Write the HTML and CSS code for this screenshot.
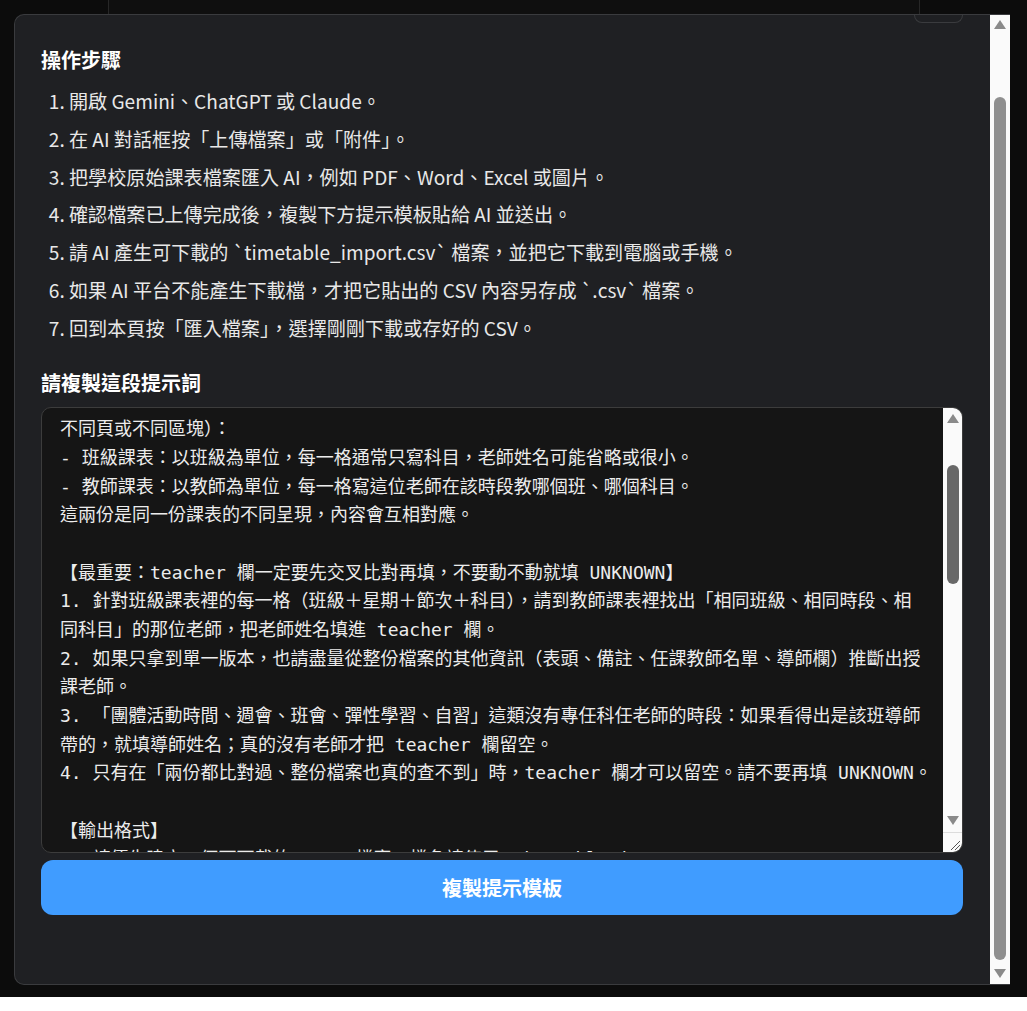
FILE: index.html
```html
<!DOCTYPE html>
<html lang="zh-Hant">
<head>
  <meta charset="UTF-8" />
  <meta name="viewport" content="width=device-width, initial-scale=1" />
  <title>匯入課表</title>
  <link rel="stylesheet" href="styles.css">
</head>
<body>
  <div class="backdrop">
    <div class="page-card"></div>

    <div class="modal">
      <div class="modal-body">
        <div class="close-tab"></div>

        <h2 class="section-title">操作步驟</h2>
        <ol class="steps">
          <li>開啟 Gemini、ChatGPT 或 Claude。</li>
          <li>在 AI 對話框按「上傳檔案」或「附件」。</li>
          <li>把學校原始課表檔案匯入 AI，例如 PDF、Word、Excel 或圖片。</li>
          <li>確認檔案已上傳完成後，複製下方提示模板貼給 AI 並送出。</li>
          <li>請 AI 產生可下載的 `timetable_import.csv` 檔案，並把它下載到電腦或手機。</li>
          <li>如果 AI 平台不能產生下載檔，才把它貼出的 CSV 內容另存成 `.csv` 檔案。</li>
          <li>回到本頁按「匯入檔案」，選擇剛剛下載或存好的 CSV。</li>
        </ol>

        <h2 class="section-title prompt-title">請複製這段提示詞</h2>
        <div class="prompt-box">
          <div class="prompt-text">不同頁或不同區塊）：
- 班級課表：以班級為單位，每一格通常只寫科目，老師姓名可能省略或很小。
- 教師課表：以教師為單位，每一格寫這位老師在該時段教哪個班、哪個科目。
這兩份是同一份課表的不同呈現，內容會互相對應。

【最重要：teacher 欄一定要先交叉比對再填，不要動不動就填 UNKNOWN】
1. 針對班級課表裡的每一格（班級＋星期＋節次＋科目），請到教師課表裡找出「相同班級、相同時段、相
同科目」的那位老師，把老師姓名填進 teacher 欄。
2. 如果只拿到單一版本，也請盡量從整份檔案的其他資訊（表頭、備註、任課教師名單、導師欄）推斷出授
課老師。
3. 「團體活動時間、週會、班會、彈性學習、自習」這類沒有專任科任老師的時段：如果看得出是該班導師
帶的，就填導師姓名；真的沒有老師才把 teacher 欄留空。
4. 只有在「兩份都比對過、整份檔案也真的查不到」時，teacher 欄才可以留空。請不要再填 UNKNOWN。

【輸出格式】
1. 請優先建立一個可下載的 .csv 檔案，檔名請使用 timetable_import.csv。</div>
          <div class="box-scrollbar">
            <div class="arrow-up"></div>
            <div class="box-thumb"></div>
            <div class="arrow-down"></div>
            <div class="resize-corner">
              <svg width="19" height="19" viewBox="0 0 19 19">
                <line x1="8" y1="17" x2="17" y2="8" stroke="#555" stroke-width="1" />
                <line x1="12" y1="17" x2="17" y2="12" stroke="#555" stroke-width="1" />
              </svg>
            </div>
          </div>
        </div>

        <button class="copy-btn">複製提示模板</button>
      </div>

      <div class="modal-scrollbar">
        <div class="arrow-up"></div>
        <div class="modal-thumb"></div>
        <div class="arrow-down"></div>
      </div>
    </div>
  </div>
</body>
</html>
```

FILE: styles.css
```css
body {
  margin: 0;
  background: #ffffff;
  font-family: "Noto Sans CJK TC", "Noto Sans", sans-serif;
}

.backdrop {
  position: relative;
  height: 997px;
  background: #0c0c0c;
  overflow: hidden;
}

.page-card {
  width: 810px;
  height: 60px;
  margin: 0 auto;
  background: #0f0f0f;
  border-left: 1px solid #272727;
  border-right: 1px solid #272727;
}

/* dialog */
.modal {
  position: absolute;
  left: 14px;
  top: 14px;
  width: 995px;
  height: 969px;
  display: flex;
  background: #1f2023;
  border: 1px solid #3a3b3e;
  border-right: none;
  border-radius: 10px 0 0 10px;
  overflow: hidden;
}

.modal-body {
  flex: 1;
  padding: 0 27px 0 26px;
  overflow: hidden;
}

.close-tab {
  width: 47px;
  height: 7px;
  margin-left: auto;
  border: 1px solid #3a3b3e;
  border-top: none;
  border-radius: 0 0 10px 10px;
}

.section-title {
  margin: 23px 0 0;
  font-size: 20px;
  line-height: 28px;
  font-weight: 700;
  color: #ffffff;
}

.steps {
  margin: 13px 0 0;
  padding-left: 28px;
  color: #e8e8e8;
  font-size: 19.1px;
  line-height: 29.8px;
}

.steps li {
  margin-bottom: 8px;
}

.prompt-title {
  margin-top: 25px;
}

/* fake textarea */
.prompt-box {
  display: flex;
  height: 444px;
  margin-top: 10px;
  background: #151515;
  border: 1px solid #3c3c3c;
  border-radius: 10px;
  overflow: hidden;
}

.prompt-text {
  flex: 1;
  padding: 7.7px 18px 0;
  white-space: pre;
  overflow: hidden;
  font-family: "DejaVu Sans Mono", "Noto Sans CJK TC", monospace;
  font-size: 18px;
  line-height: 28.67px;
  color: #ececec;
}

.box-scrollbar {
  width: 19px;
  display: flex;
  flex-direction: column;
  align-items: center;
  background: #fafafa;
}

.box-scrollbar .arrow-up {
  margin-top: 6px;
}

.box-thumb {
  width: 12px;
  height: 119px;
  margin-top: 42px;
  background: #686868;
  border-radius: 6px;
}

.box-scrollbar .arrow-down {
  margin-top: auto;
  margin-bottom: 7px;
}

.resize-corner {
  width: 19px;
  height: 19px;
  border-top: 1px solid #dcdcdc;
}

.resize-corner svg {
  display: block;
}

.arrow-up {
  width: 0;
  height: 0;
  border-left: 6px solid transparent;
  border-right: 6px solid transparent;
  border-bottom: 9px solid #8a8a8a;
}

.arrow-down {
  width: 0;
  height: 0;
  border-left: 6px solid transparent;
  border-right: 6px solid transparent;
  border-top: 9px solid #8a8a8a;
}

.copy-btn {
  display: block;
  width: 100%;
  height: 55px;
  margin-top: 7px;
  border: none;
  border-radius: 12px;
  background: #409cff;
  color: #ffffff;
  font-family: "Noto Sans CJK TC", "Noto Sans", sans-serif;
  font-size: 20px;
  font-weight: 700;
  cursor: pointer;
}

/* dialog scrollbar */
.modal-scrollbar {
  width: 20px;
  display: flex;
  flex-direction: column;
  align-items: center;
  background: #fafafa;
}

.modal-scrollbar .arrow-up {
  margin-top: 5px;
}

.modal-thumb {
  width: 12px;
  height: 863px;
  margin-top: 68px;
  background: #8f8f8f;
  border-radius: 6px;
}

.modal-scrollbar .arrow-down {
  margin-top: 9px;
}
```
